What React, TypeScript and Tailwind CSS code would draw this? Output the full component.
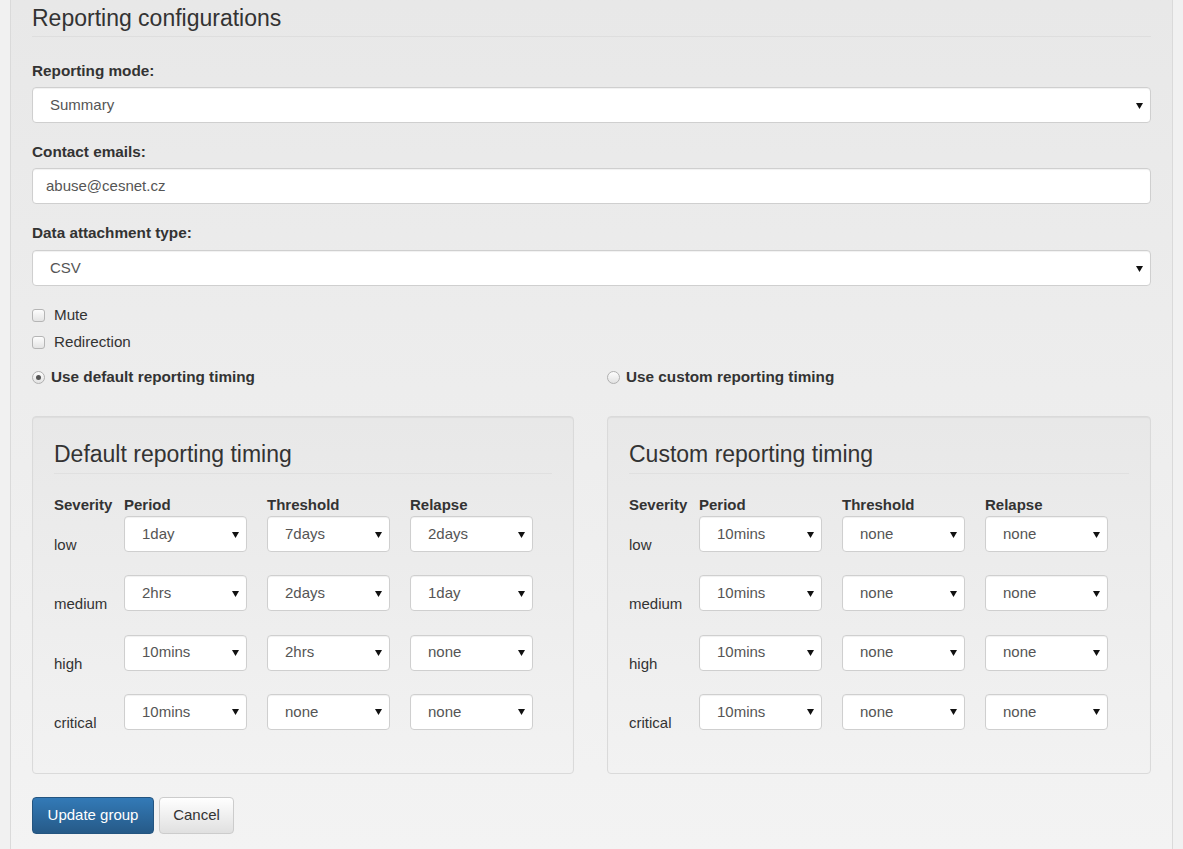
import React from 'react';

const font = { fontFamily: '"Liberation Sans", Arial, Helvetica, sans-serif' };

function Arrow() {
    return (
        <svg width="7" height="7" viewBox="0 0 7 7" className="shrink-0">
            <polygon points="0,1 7,1 3.5,7" fill="#111" />
        </svg>
    );
}

function FakeSelect({ value, className = '' }: { value: string; className?: string }) {
    return (
        <div
            className={
                'flex h-[36px] items-center justify-between rounded-[4px] border border-[#cfcfcf] bg-white pl-[17px] pr-[7px] text-[15px] text-[#555] shadow-[inset_0_1px_1px_rgba(0,0,0,0.06)] ' +
                className
            }
        >
            <span>{value}</span>
            <Arrow />
        </div>
    );
}

function Checkbox({ label }: { label: string }) {
    return (
        <div className="flex h-[20px] items-center gap-[9px]">
            <span className="h-[13px] w-[13px] rounded-[3px] border border-[#b5b5b5] bg-gradient-to-b from-[#fdfdfd] to-[#e4e4e4]" />
            <span className="text-[15.2px] text-[#333]">{label}</span>
        </div>
    );
}

function Radio({ label, checked }: { label: string; checked?: boolean }) {
    return (
        <div className="flex h-[20px] items-center gap-[6px]">
            <span className="flex h-[13px] w-[13px] items-center justify-center rounded-full border border-[#b0b0b0] bg-gradient-to-b from-[#fdfdfd] to-[#e2e2e2]">
                {checked && <span className="h-[5px] w-[5px] rounded-full bg-[#555]" />}
            </span>
            <span className="text-[15.3px] font-bold text-[#333]">{label}</span>
        </div>
    );
}

type Row = { severity: string; values: [string, string, string] };

const defaultRows: Row[] = [
    { severity: 'low', values: ['1day', '7days', '2days'] },
    { severity: 'medium', values: ['2hrs', '2days', '1day'] },
    { severity: 'high', values: ['10mins', '2hrs', 'none'] },
    { severity: 'critical', values: ['10mins', 'none', 'none'] },
];

const customRows: Row[] = [
    { severity: 'low', values: ['10mins', 'none', 'none'] },
    { severity: 'medium', values: ['10mins', 'none', 'none'] },
    { severity: 'high', values: ['10mins', 'none', 'none'] },
    { severity: 'critical', values: ['10mins', 'none', 'none'] },
];

function TimingWell({ title, rows }: { title: string; rows: Row[] }) {
    return (
        <div className="h-[358px] rounded-[4px] border border-[#dadada] bg-gradient-to-b from-[#e8e8e8] to-[#f2f2f2] px-[21px] shadow-[inset_0_1px_1px_rgba(0,0,0,0.05)]">
            <h4 className="mt-[24px] border-b border-[#e0e0e0] pb-[6px] text-[23px] leading-[26px] text-[#333]">
                {title}
            </h4>
            <div className="mt-[21px] flex h-[20px] items-center text-[15px] font-bold text-[#333]">
                <span className="w-[70px] shrink-0">Severity</span>
                <span className="w-[143px] shrink-0">Period</span>
                <span className="w-[143px] shrink-0">Threshold</span>
                <span>Relapse</span>
            </div>
            <div className="mt-[1px] flex flex-col gap-[23.3px]">
                {rows.map((row) => (
                    <div key={row.severity} className="flex h-[36px]">
                        <span className="mt-[19px] w-[70px] shrink-0 text-[15px] leading-[20px] text-[#333]">
                            {row.severity}
                        </span>
                        {row.values.map((v, i) => (
                            <div key={i} className="w-[143px] shrink-0">
                                <FakeSelect value={v} className="w-[123px]" />
                            </div>
                        ))}
                    </div>
                ))}
            </div>
        </div>
    );
}

export default function App() {
    return (
        <div className="min-h-[849px] bg-[#f1f1f1] pl-[10px] pr-[10px]" style={font}>
            <div className="w-[1163px] border-x border-[#dadada] bg-gradient-to-b from-[#e8e8e8] to-[#f3f3f3] px-[21px] pb-[15px] pt-[5px]">
                {/* Heading */}
                <h3 className="border-b border-[#dedede] pb-[5px] text-[23px] leading-[26px] text-[#333]">
                    Reporting configurations
                </h3>

                {/* Reporting mode */}
                <label className="mt-[24px] block text-[15.3px] font-bold leading-[20px] text-[#333]">
                    Reporting mode:
                </label>
                <FakeSelect value="Summary" className="mt-[6px]" />

                {/* Contact emails */}
                <label className="mt-[19px] block text-[15.3px] font-bold leading-[20px] text-[#333]">
                    Contact emails:
                </label>
                <div className="mt-[6px] flex h-[36px] items-center rounded-[4px] border border-[#cfcfcf] bg-white pl-[13px] text-[15px] text-[#555] shadow-[inset_0_1px_1px_rgba(0,0,0,0.06)]">
                    abuse@cesnet.cz
                </div>

                {/* Data attachment type */}
                <label className="mt-[19px] block text-[15.3px] font-bold leading-[20px] text-[#333]">
                    Data attachment type:
                </label>
                <FakeSelect value="CSV" className="mt-[7px]" />

                {/* Checkboxes */}
                <div className="mt-[19px] flex flex-col gap-[7px]">
                    <Checkbox label="Mute" />
                    <Checkbox label="Redirection" />
                </div>

                {/* Timing */}
                <div className="mt-[15px] grid grid-cols-[542px_1fr] gap-x-[33px]">
                    <Radio label="Use default reporting timing" checked />
                    <Radio label="Use custom reporting timing" />
                </div>
                <div className="mt-[29px] grid grid-cols-[542px_1fr] gap-x-[33px]">
                    <TimingWell title="Default reporting timing" rows={defaultRows} />
                    <TimingWell title="Custom reporting timing" rows={customRows} />
                </div>

                {/* Buttons */}
                <div className="mt-[23px] flex gap-[5px]">
                    <button className="h-[37px] w-[122px] rounded-[4px] border border-[#245580] bg-gradient-to-b from-[#337ab7] to-[#265a88] text-[15px] text-white">
                        Update group
                    </button>
                    <button className="h-[37px] w-[75px] rounded-[4px] border border-[#cccccc] bg-gradient-to-b from-[#ffffff] to-[#e0e0e0] text-[15px] text-[#333]">
                        Cancel
                    </button>
                </div>
            </div>
        </div>
    );
}
